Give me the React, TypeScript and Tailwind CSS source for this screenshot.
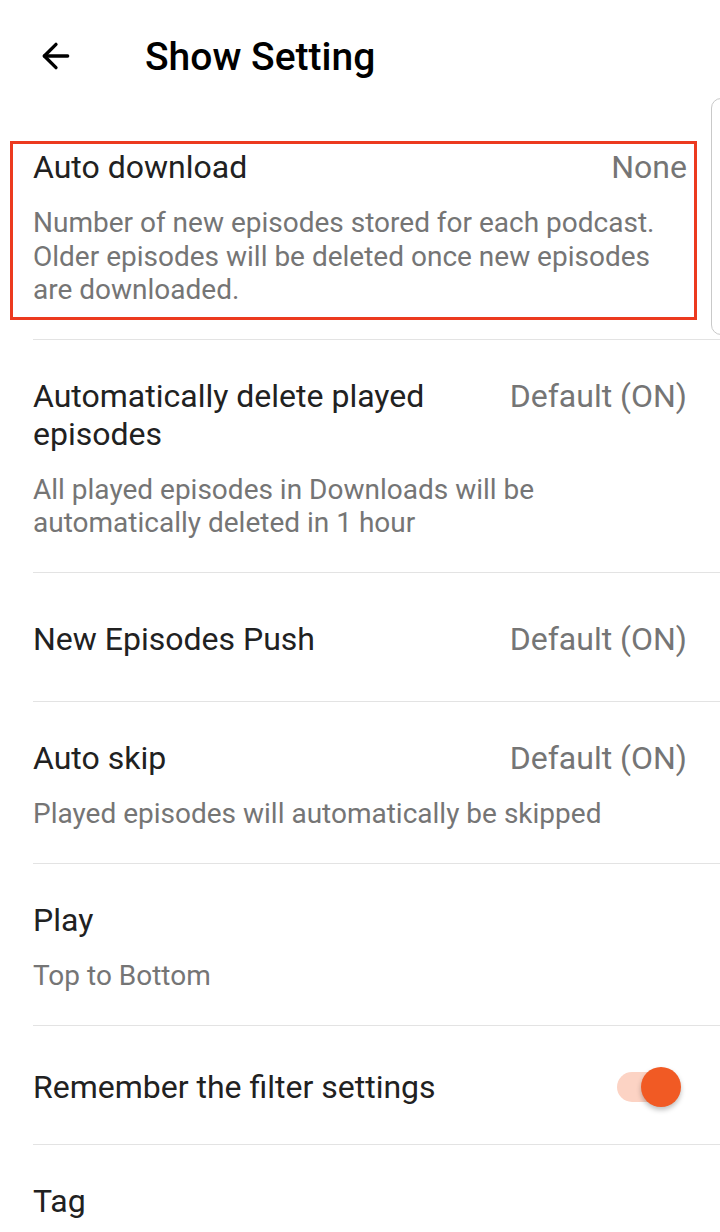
import { ArrowLeft } from 'lucide-react';

type Row = {
  title: string;
  value?: string;
  desc?: string;
  toggle?: boolean;
  pad: string;
};

const rows: Row[] = [
  {
    title: 'Automatically delete played episodes',
    value: 'Default (ON)',
    desc: 'All played episodes in Downloads will be automatically deleted in 1 hour',
    pad: 'pt-[37px] pb-[32px]',
  },
  { title: 'New Episodes Push', value: 'Default (ON)', pad: 'pt-[47px] pb-[43px]' },
  {
    title: 'Auto skip',
    value: 'Default (ON)',
    desc: 'Played episodes will automatically be skipped',
    pad: 'pt-[37px] pb-[33px]',
  },
  { title: 'Play', desc: 'Top to Bottom', pad: 'pt-[37px] pb-[32px]' },
  { title: 'Remember the filter settings', toggle: true, pad: 'pt-[42px] pb-[38px]' },
  { title: 'Tag', desc: 'Manage your subscriptions with custom tags', pad: 'pt-[37px] pb-[32px]' },
];

function Toggle() {
  return (
    <div className="relative w-[66px] h-[38px] flex items-center shrink-0 mr-[6px]">
      <div className="absolute left-[2px] right-[10px] h-[30px] rounded-full bg-[#fcd3c4]" />
      <div className="absolute right-0 w-[40px] h-[40px] rounded-full bg-[#f15a24] shadow-[0_3px_5px_rgba(0,0,0,0.25)]" />
    </div>
  );
}

function SettingRow({ row }: { row: Row }) {
  return (
    <div className="ml-[33px] border-t border-[#e3e3e3]">
      <div className={`pr-[33px] ${row.pad}`}>
        <div className="flex items-start justify-between gap-[30px]">
          <span className="text-[32px] leading-[38px] text-[#212121]">{row.title}</span>
          {row.value && <span className="text-[32px] leading-[38px] text-[#757575] shrink-0">{row.value}</span>}
          {row.toggle && <Toggle />}
        </div>
        {row.desc && <p className="mt-[20px] text-[28px] leading-[33.5px] text-[#757575]">{row.desc}</p>}
      </div>
    </div>
  );
}

export default function App() {
  return (
    <div className="relative w-[720px] h-[1232px] overflow-hidden bg-white font-['Roboto',sans-serif]">
      <header className="h-[111px] flex items-start pt-[36px]">
        <ArrowLeft className="ml-[36px] w-[40px] h-[40px] text-black" strokeWidth={2} />
        <h1 className="ml-[69px] -mt-[2px] text-[39px] leading-[46px] font-medium text-black">Show Setting</h1>
      </header>

      <div className="absolute left-[711px] top-[98px] w-[40px] h-[237px] rounded-[10px] border border-[#c9c9c9]" />

      <div className="relative pl-[33px] pr-[33px] pt-[37px] pb-[32px]">
        <div className="absolute left-[10px] top-[30px] w-[687px] h-[179px] border-[3px] border-[#ec3a1f]" />
        <div className="flex items-start justify-between gap-[30px]">
          <span className="text-[32px] leading-[38px] text-[#212121]">Auto download</span>
          <span className="text-[32px] leading-[38px] text-[#757575]">None</span>
        </div>
        <p className="mt-[20px] text-[28px] leading-[33.5px] text-[#757575]">
          Number of new episodes stored for each podcast. Older episodes will be deleted once new episodes are
          downloaded.
        </p>
      </div>

      {rows.map(r => (
        <SettingRow key={r.title} row={r} />
      ))}
    </div>
  );
}
